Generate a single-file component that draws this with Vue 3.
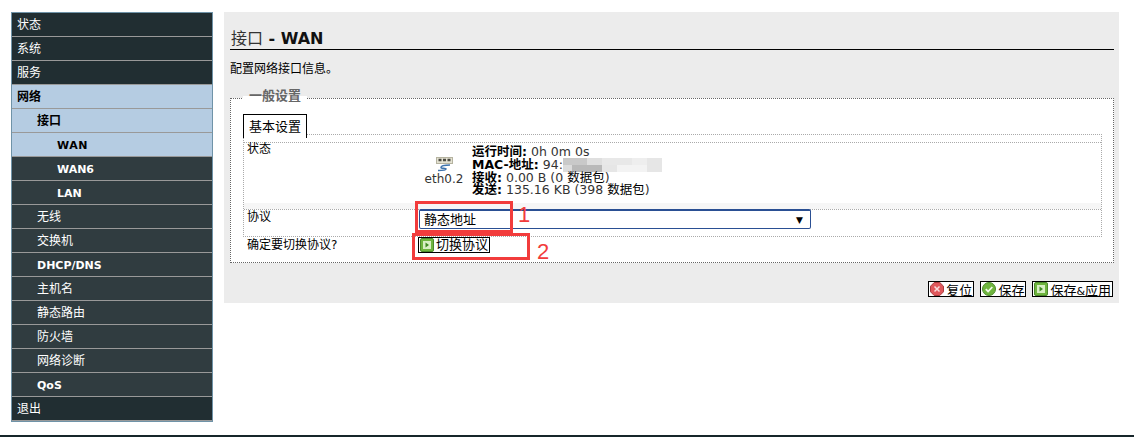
<template>
  <div class="page">
    <ul class="menu">
      <li
        v-for="item in menu"
        :key="item.label"
        class="menu-item"
        :class="['level-' + item.level, { active: item.active, latin: item.latin }]"
      >
        {{ item.label }}
      </li>
    </ul>

    <div class="main">
      <div class="content">
        <h2 class="title"><span class="title-cjk">接口</span> - WAN</h2>
        <p class="desc">配置网络接口信息。</p>

        <div class="fieldset">
          <span class="legend">一般设置</span>
          <div class="tab">基本设置</div>

          <div class="table">
            <div class="row row-status">
              <div class="label">状态</div>
              <div class="status">
                <div class="iface">
                  <svg class="iface-icon" width="17" height="15" viewBox="0 0 17 15">
                    <rect x="0.500" y="0.500" width="16" height="6" fill="#e4e2d2" stroke="#b5b3a0" stroke-width="1" />
                    <path d="M2.500 3h3M7 3h3M11.500 3h3" stroke="#4a4a42" stroke-width="2.400" />
                    <path d="M14 8c-3 0-9 .5-9 2.500 0 1.500 5 0 5 1.500 0 1-4 1.500-8 1.500" stroke="#3f74ad" stroke-width="1.500" fill="none" />
                  </svg>
                  <span>eth0.2</span>
                </div>
                <div class="stats">
                  <div><b>运行时间:</b> 0h 0m 0s</div>
                  <div><b>MAC-地址:</b> 94:<span class="mosaic"></span></div>
                  <div><b>接收:</b> 0.00 B (0 <span class="cjk">数据包</span>)</div>
                  <div><b>发送:</b> 135.16 KB (398 <span class="cjk">数据包</span>)</div>
                </div>
              </div>
            </div>

            <div class="row row-proto">
              <div class="label">协议</div>
              <div class="field">
                <div class="select">
                  <span>静态地址</span>
                  <span class="caret">▼</span>
                </div>
                <span class="mark mark-select"></span>
                <span class="mark-num num-1">1</span>
              </div>
            </div>
          </div>

          <div class="row row-switch">
            <div class="label">确定要切换协议?</div>
            <div class="field">
              <button class="btn">
                <svg class="btn-icon" width="14" height="14" viewBox="0 0 14 14">
                  <rect x="0.500" y="0.500" width="13" height="13" rx="1.500" fill="#6fb53f" stroke="#4c8a2c" />
                  <rect x="3" y="3" width="8" height="8" fill="#d8efc4" />
                  <path d="M5.500 4.500l3.500 2.500-3.500 2.500z" fill="#3f8a22" />
                </svg>
                切换协议
              </button>
              <span class="mark mark-button"></span>
              <span class="mark-num num-2">2</span>
            </div>
          </div>
        </div>

        <div class="actions">
          <button class="btn">
            <svg class="btn-icon" width="14" height="14" viewBox="0 0 14 14">
              <path d="M4.200 0.500h5.600l3.700 3.700v5.600l-3.700 3.700H4.200L0.500 9.800V4.200z" fill="#e0585c" stroke="#a93a3e" />
              <path d="M4.500 4.500l5 5M9.500 4.500l-5 5" stroke="#f8dcdc" stroke-width="1.500" />
            </svg>
            复位
          </button>
          <button class="btn">
            <svg class="btn-icon" width="14" height="14" viewBox="0 0 14 14">
              <circle cx="7" cy="7" r="6.500" fill="#6fb53f" stroke="#4c8a2c" />
              <path d="M3.800 7.200l2.300 2.300 4.200-4.500" fill="none" stroke="#f1f8e8" stroke-width="1.800" />
            </svg>
            保存
          </button>
          <button class="btn">
            <svg class="btn-icon" width="14" height="14" viewBox="0 0 14 14">
              <rect x="0.500" y="0.500" width="13" height="13" rx="1.500" fill="#6fb53f" stroke="#4c8a2c" />
              <rect x="3" y="3" width="8" height="8" fill="#d8efc4" />
              <path d="M5.500 4.500l3.500 2.500-3.500 2.500z" fill="#3f8a22" />
            </svg>
            <span>保存<span class="amp">&amp;</span>应用</span>
          </button>
        </div>
      </div>
    </div>
  </div>
</template>

<script setup>
const menu = [
  { label: '状态', level: 1 },
  { label: '系统', level: 1 },
  { label: '服务', level: 1 },
  { label: '网络', level: 1, active: true },
  { label: '接口', level: 2, active: true },
  { label: 'WAN', level: 3, active: true, latin: true },
  { label: 'WAN6', level: 3, latin: true },
  { label: 'LAN', level: 3, latin: true },
  { label: '无线', level: 2 },
  { label: '交换机', level: 2 },
  { label: 'DHCP/DNS', level: 2, latin: true },
  { label: '主机名', level: 2 },
  { label: '静态路由', level: 2 },
  { label: '防火墙', level: 2 },
  { label: '网络诊断', level: 2 },
  { label: 'QoS', level: 2, latin: true },
  { label: '退出', level: 1 }
]
</script>

<style>
body {
  margin: 0;
  background: #fff;
}
</style>

<style scoped>
.page {
  box-sizing: border-box;
  display: flex;
  align-items: flex-start;
  gap: 11px;
  width: 1134px;
  height: 437px;
  padding: 12px 0 0 11px;
  border-bottom: 2px solid #16262a;
  overflow: hidden;
  font-family: "DejaVu Sans", "Noto Sans CJK SC", sans-serif;
  font-size: 12px;
  color: #000;
}

.menu {
  flex: none;
  width: 202px;
  box-sizing: border-box;
  margin: 0;
  padding: 0;
  list-style: none;
  border: 1px solid #6f93a8;
}

.menu-item {
  box-sizing: border-box;
  height: 24px;
  line-height: 25px;
  border-bottom: 1px solid #999;
  background: #303c40;
  color: #fff;
}

.level-1 {
  padding-left: 5px;
  background: #212e32;
}

.level-2 {
  padding-left: 25px;
}

.level-3 {
  padding-left: 45px;
}

.latin {
  font-size: 11px;
  font-weight: bold;
}

.active {
  background: #b5cce2;
  color: #000;
  font-weight: bold;
}

.active.latin {
  letter-spacing: 0.600px;
}

.main {
  flex: none;
  width: 895px;
}

.content {
  position: relative;
  box-sizing: border-box;
  height: 291px;
  padding: 14px 5px 0 6px;
  background: #ececec;
}

.title {
  margin: 0;
  height: 23px;
  line-height: 26px;
  border-bottom: 1px solid #000;
  font-size: 16px;
  font-weight: bold;
  color: #111;
  padding-left: 1px;
}

.title-cjk {
  font-weight: normal;
  color: #333;
}

.desc {
  margin: 0;
  padding-top: 12px;
  line-height: 14px;
}

.fieldset {
  position: relative;
  box-sizing: border-box;
  height: 165px;
  margin-top: 22px;
  padding: 15px 12px 0;
  border: 1px dotted #666;
  background: #fff;
}

.legend {
  position: absolute;
  left: 12px;
  top: -10px;
  padding: 0 6px;
  height: 14px;
  line-height: 14px;
  background: linear-gradient(#ececec 50%, #fff 50%);
  font-size: 13px;
  font-weight: bold;
  color: #666;
}

.tab {
  position: relative;
  z-index: 1;
  box-sizing: border-box;
  width: 64px;
  height: 24px;
  margin-bottom: -4px;
  line-height: 24px;
  font-size: 13px;
  text-align: center;
  background: #fff;
  border: 1px solid #000;
  border-bottom: 0;
}

.table {
  box-sizing: border-box;
  height: 103px;
  width: 859px;
  padding-top: 7px;
  border: 1px dotted #aaa;
}

.row {
  display: flex;
}

.label {
  flex: none;
  width: 171px;
  padding-left: 3px;
}

.row-status {
  box-sizing: border-box;
  height: 67px;
  border-top: 1px dotted #aaa;
  border-bottom: 6px solid #f6f6f6;
  line-height: 13px;
}

.row-proto {
  height: 27px;
  border-top: 1px dotted #aaa;
  line-height: 14px;
}

.status {
  display: flex;
  align-items: flex-start;
}

.iface {
  display: flex;
  flex-direction: column;
  align-items: center;
  width: 40px;
  margin: 14px 8px 0 6px;
  color: #333;
  line-height: 14px;
}

.iface-icon {
  display: block;
}

.stats {
  padding-top: 3px;
  line-height: 12px;
  font-size: 12.500px;
  white-space: nowrap;
  color: #333;
}

.stats b {
  color: #000;
}

.cjk {
  color: #000;
}

.mosaic {
  display: inline-block;
  width: 99px;
  height: 14px;
  vertical-align: middle;
  background:
    linear-gradient(90deg, #c9c9c9 0 24px, #dfdfdf 24px 39px, #e8e8e8 39px 69px, #eeeeee 69px 84px, #e6e6e6 84px 99px) top / 100% 7px no-repeat,
    linear-gradient(90deg, #dcdcdc 0 9px, #b9b9b9 9px 39px, #e6e6e6 39px 54px, #f3f3f3 54px 84px, #e6e6e6 84px 99px) bottom / 100% 7px no-repeat;
}

.field {
  position: relative;
  flex: none;
  padding-left: 1px;
}

.select {
  box-sizing: border-box;
  display: flex;
  justify-content: space-between;
  align-items: center;
  width: 392px;
  height: 20px;
  margin-top: -1px;
  padding: 0 7px 0 4px;
  border: 1px solid #2a4f93;
  border-top: 2px solid #2a4f93;
  border-radius: 2px;
  background: #fff;
  font-size: 13px;
}

.caret {
  font-size: 9px;
}

.mark {
  position: absolute;
  box-sizing: border-box;
  border: 3px solid #f23c3c;
  pointer-events: none;
}

.mark-select {
  left: -3px;
  top: -9px;
  width: 98px;
  height: 32px;
}

.mark-button {
  left: -5px;
  top: -4px;
  width: 118px;
  height: 27px;
}

.mark-num {
  position: absolute;
  font-family: "Liberation Sans", sans-serif;
  font-size: 22px;
  line-height: 20px;
  color: #f23c3c;
}

.num-1 {
  left: 100px;
  top: -5px;
}

.num-2 {
  left: 120px;
  top: 5px;
}

.row-switch {
  height: 25px;
  line-height: 16px;
}

.row-switch .label {
  width: 170px;
  padding-left: 4px;
}

.btn {
  box-sizing: border-box;
  display: inline-flex;
  align-items: center;
  gap: 2px;
  height: 16px;
  margin: 0;
  padding: 0 1px;
  border: 1px solid #000;
  border-radius: 0;
  background: #fff;
  font: inherit;
  font-size: 13px;
  color: #000;
  white-space: nowrap;
}

.btn-icon {
  flex: none;
}

.amp {
  font-size: 11px;
}

.actions {
  position: absolute;
  right: 6px;
  bottom: 6px;
  display: flex;
  gap: 6px;
}
</style>
